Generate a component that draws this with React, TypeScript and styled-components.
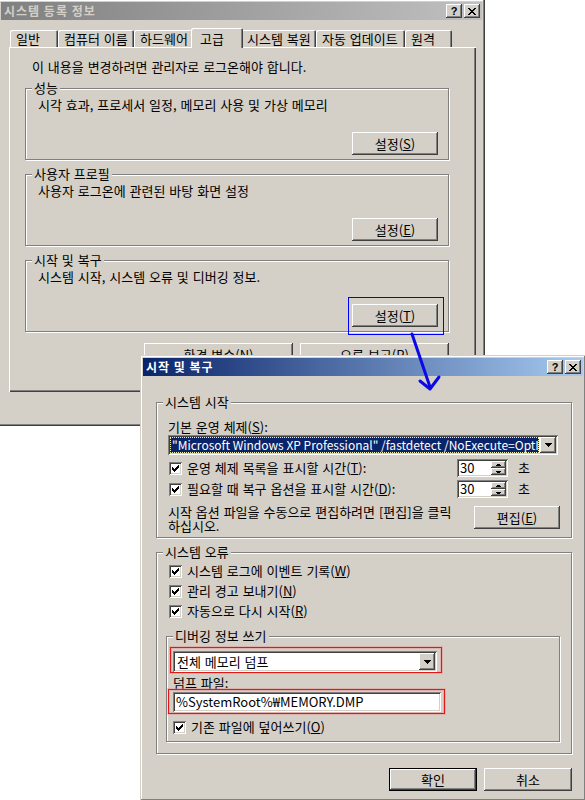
import React from "react";
import styled, { createGlobalStyle, css } from "styled-components";

const FACE = "#d4d0c8";

const GlobalStyle = createGlobalStyle`
  html, body { margin: 0; padding: 0; background: #ffffff; }
  body {
    font-family: "Noto Sans CJK KR", "Liberation Sans", sans-serif;
    font-size: 13px;
    word-spacing: 1px;
    color: #000;
  }
  * { box-sizing: border-box; }
`;

const raised = css`
  box-shadow: inset -1px -1px #404040, inset 1px 1px #ffffff,
    inset -2px -2px #808080, inset 2px 2px ${FACE};
`;

const frame = css`
  box-shadow: inset -1px -1px #404040, inset 1px 1px ${FACE},
    inset -2px -2px #808080, inset 2px 2px #ffffff;
`;

const sunken = css`
  box-shadow: inset 1px 1px #808080, inset -1px -1px #ffffff,
    inset 2px 2px #404040, inset -2px -2px ${FACE};
`;

const Desktop = styled.div`
  position: relative;
  width: 585px;
  height: 800px;
  overflow: hidden;
  background: #ffffff;
`;

const Window = styled.div<{ $x: number; $y: number; $w: number; $h: number }>`
  position: absolute;
  left: ${(p) => p.$x}px;
  top: ${(p) => p.$y}px;
  width: ${(p) => p.$w}px;
  height: ${(p) => p.$h}px;
  padding: 3px;
  background: ${FACE};
  ${frame}
  display: flex;
  flex-direction: column;
`;

const TitleBar = styled.div<{ $active?: boolean }>`
  flex: none;
  height: 18px;
  display: flex;
  align-items: center;
  padding: 0 2px 0 3px;
  background: ${(p) =>
    p.$active
      ? "linear-gradient(to right, #0a246a, #a6caf0)"
      : "linear-gradient(to right, #808080, #c0c0c0)"};
  color: ${(p) => (p.$active ? "#ffffff" : FACE)};
`;

const TitleText = styled.span`
  flex: 1;
  font-size: 12px;
  font-weight: bold;
  letter-spacing: 1px;
  word-spacing: 0;
  line-height: 18px;
  white-space: nowrap;
`;

const CaptionButtons = styled.div`
  display: flex;
  gap: 2px;
`;

const CaptionButton = styled.div`
  width: 16px;
  height: 14px;
  background: ${FACE};
  ${raised}
  display: flex;
  align-items: center;
  justify-content: center;
  color: #000;
  font-family: "Liberation Sans", sans-serif;
  font-weight: bold;
  font-size: 11px;
  line-height: 12px;
`;

/* property sheet (window 1) */

const SheetBody = styled.div`
  flex: 1;
  display: flex;
  flex-direction: column;
  padding: 8px 6px 0 8px;
`;

const TabStrip = styled.div`
  display: flex;
  align-items: flex-end;
  height: 19px;
  padding-left: 1px;
`;

const Tab = styled.div<{ $w: number; $active?: boolean }>`
  position: relative;
  z-index: ${(p) => (p.$active ? 2 : 1)};
  width: ${(p) => (p.$active ? p.$w + 4 : p.$w)}px;
  height: ${(p) => (p.$active ? 20 : 17)}px;
  margin: ${(p) => (p.$active ? "0 -2px -1px" : "0")};
  padding: ${(p) => (p.$active ? "4px 0 0 9px" : "2px 0 0 6px")};
  background: ${FACE};
  border-top-left-radius: 2px;
  border-top-right-radius: 2px;
  box-shadow: inset 1px 1px #ffffff, inset -1px 0 #404040, inset -2px 0 #808080;
  line-height: 14px;
  white-space: nowrap;
`;

const TabPanel = styled.div`
  height: 345px;
  background: ${FACE};
  box-shadow: inset 1px 1px #ffffff, inset -1px -1px #404040, inset -2px -2px #808080;
  padding: 13px 0 0 16px;
  display: flex;
  flex-direction: column;
`;

const Note = styled.div`
  line-height: 14px;
  padding-left: 7px;
  margin-bottom: 14px;
  white-space: nowrap;
`;

const Group = styled.div<{ $h: number; $w?: number }>`
  position: relative;
  flex: none;
  height: ${(p) => p.$h}px;
  width: ${(p) => (p.$w ? `${p.$w}px` : "auto")};
  border: 1px solid #808080;
  box-shadow: inset 1px 1px #ffffff, 1px 1px #ffffff;
  display: flex;
  flex-direction: column;
`;

const Legend = styled.span`
  position: absolute;
  top: -8px;
  left: 6px;
  padding: 0 2px;
  background: ${FACE};
  line-height: 14px;
  white-space: nowrap;
`;

const SectionBody = styled.div`
  flex: 1;
  display: flex;
  flex-direction: column;
  padding: 9px 10px 4px 12px;
`;

const Desc = styled.div`
  line-height: 14px;
  white-space: nowrap;
`;

const ButtonRow = styled.div<{ $gap?: number }>`
  display: flex;
  justify-content: flex-end;
  gap: ${(p) => p.$gap ?? 7}px;
  margin-top: auto;
`;

const Stack = styled.div<{ $gap: number }>`
  display: flex;
  flex-direction: column;
  gap: ${(p) => p.$gap}px;
  width: 424px;
`;

const Btn = styled.button<{ $w: number; $default?: boolean }>`
  width: ${(p) => p.$w}px;
  height: 23px;
  padding: 0;
  margin: 0;
  font: inherit;
  word-spacing: inherit;
  color: #000;
  background: ${FACE};
  border: ${(p) => (p.$default ? "1px solid #000000" : "none")};
  ${raised}
  display: flex;
  align-items: center;
  justify-content: center;
  line-height: 14px;
  white-space: nowrap;
  u { text-underline-offset: 1px; }
`;

const SheetButtons = styled.div`
  display: flex;
  justify-content: flex-end;
  gap: 6px;
  margin-top: 7px;
`;

/* dialog (window 2) */

const DialogBody = styled.div`
  flex: 1;
  display: flex;
  flex-direction: column;
  padding: 26px 11px 0 13px;
`;

const BootBody = styled.div`
  flex: 1;
  display: flex;
  flex-direction: column;
  padding: 17px 12px 0 11px;
`;

const FieldLabel = styled.div<{ $indent?: number; $lh?: number }>`
  line-height: ${(p) => p.$lh ?? 14}px;
  padding-left: ${(p) => p.$indent ?? 0}px;
  white-space: nowrap;
`;

const Combo = styled.div<{ $w?: number; $h: number }>`
  width: ${(p) => (p.$w ? `${p.$w}px` : "auto")};
  height: ${(p) => p.$h}px;
  background: #ffffff;
  ${sunken}
  padding: 2px;
  display: flex;
  align-items: stretch;
`;

const ComboValue = styled.div<{ $selected?: boolean }>`
  flex: 1;
  min-width: 0;
  overflow: hidden;
  white-space: nowrap;
  line-height: 14px;
  padding-left: 2px;
  font-size: ${(p) => (p.$selected ? "12px" : "inherit")};
  word-spacing: ${(p) => (p.$selected ? "0" : "inherit")};
  margin: ${(p) => (p.$selected ? "0 1px 0 0" : "0")};
  background: ${(p) => (p.$selected ? "#0a246a" : "transparent")};
  color: ${(p) => (p.$selected ? "#ffffff" : "#000")};
  outline: ${(p) => (p.$selected ? "1px dotted #f0f0b0" : "none")};
  outline-offset: -1px;
  display: flex;
  align-items: center;
`;

const DropButton = styled.div`
  width: 16px;
  flex: none;
  background: ${FACE};
  ${raised}
  display: flex;
  align-items: center;
  justify-content: center;
`;

const CheckRow = styled.div<{ $h: number; $indent?: number }>`
  display: flex;
  align-items: center;
  height: ${(p) => p.$h}px;
  padding-left: ${(p) => p.$indent ?? 1}px;
`;

const CheckBox = styled.span`
  flex: none;
  width: 13px;
  height: 13px;
  background: #ffffff;
  ${sunken}
  display: flex;
  align-items: center;
  justify-content: center;
`;

const CheckLabel = styled.span`
  flex: 1;
  margin-left: 5px;
  line-height: 14px;
  white-space: nowrap;
`;

const Spin = styled.div`
  width: 51px;
  height: 18px;
  background: #ffffff;
  ${sunken}
  padding: 2px;
  display: flex;
`;

const SpinValue = styled.span`
  flex: 1;
  line-height: 14px;
  padding-left: 1px;
`;

const SpinButtons = styled.div`
  width: 15px;
  display: flex;
  flex-direction: column;
`;

const SpinButton = styled.div`
  flex: 1;
  background: ${FACE};
  ${raised}
  display: flex;
  align-items: center;
  justify-content: center;
`;

const Unit = styled.span`
  width: 51px;
  padding-left: 10px;
  line-height: 14px;
`;

const EditRow = styled.div`
  display: flex;
  align-items: flex-start;
  margin-top: 7px;
  margin-right: -1px;
`;

const EditText = styled.div`
  flex: 1;
  line-height: 14px;
  white-space: nowrap;
`;

const ErrorBody = styled.div`
  flex: 1;
  display: flex;
  flex-direction: column;
  padding: 8px 11px 0 0;
`;

const DebugGroup = styled(Group)`
  margin: 15px 0 0 9px;
`;

const DebugBody = styled.div`
  display: flex;
  flex-direction: column;
  padding-top: 10px;
`;

const Highlight = styled.div<{ $w: number; $ml: number; $pad: string }>`
  width: ${(p) => p.$w}px;
  margin-left: ${(p) => p.$ml}px;
  padding: ${(p) => p.$pad};
  border: 1px solid #e01818;
  box-shadow: 0 0 0 1px rgba(240, 120, 120, 0.35), inset 0 0 0 1px rgba(240, 120, 120, 0.35);
`;

const TextInput = styled.div`
  height: 20px;
  background: #ffffff;
  ${sunken}
  padding: 2px 3px;
  line-height: 16px;
  white-space: nowrap;
  overflow: hidden;
`;

const Overlay = styled.svg`
  position: absolute;
  left: 0;
  top: 0;
  width: 585px;
  height: 800px;
  pointer-events: none;
  z-index: 10;
`;

function CloseGlyph() {
  return (
    <svg width="8" height="7" viewBox="0 0 8 7" shapeRendering="crispEdges">
      <path
        d="M0 0h2v1H0z M6 0h2v1H6z M1 1h2v1H1z M5 1h2v1H5z M2 2h4v1H2z M3 3h2v1H3z M2 4h4v1H2z M1 5h2v1H1z M5 5h2v1H5z M0 6h2v1H0z M6 6h2v1H6z"
        fill="#000"
      />
    </svg>
  );
}

function Caption() {
  return (
    <CaptionButtons>
      <CaptionButton>?</CaptionButton>
      <CaptionButton>
        <CloseGlyph />
      </CaptionButton>
    </CaptionButtons>
  );
}

function Check() {
  return (
    <CheckBox>
      <svg width="7" height="7" viewBox="0 0 7 7" shapeRendering="crispEdges">
        <path
          d="M0 2h1v3H0z M1 3h1v3H1z M2 4h1v3H2z M3 3h1v3H3z M4 2h1v3H4z M5 1h1v3H5z M6 0h1v3H6z"
          fill="#000"
        />
      </svg>
    </CheckBox>
  );
}

function DownArrow() {
  return (
    <svg width="7" height="4" viewBox="0 0 7 4" shapeRendering="crispEdges">
      <path d="M0 0h7v1H0z M1 1h5v1H1z M2 2h3v1H2z M3 3h1v1H3z" fill="#000" />
    </svg>
  );
}

function SpinBox({ value }: { value: string }) {
  return (
    <Spin>
      <SpinValue>{value}</SpinValue>
      <SpinButtons>
        <SpinButton>
          <svg width="5" height="2" viewBox="0 0 5 2" shapeRendering="crispEdges">
            <path d="M1 0h3v1H1z M0 1h5v1H0z" fill="#000" />
          </svg>
        </SpinButton>
        <SpinButton>
          <svg width="5" height="2" viewBox="0 0 5 2" shapeRendering="crispEdges">
            <path d="M0 0h5v1H0z M1 1h3v1H1z" fill="#000" />
          </svg>
        </SpinButton>
      </SpinButtons>
    </Spin>
  );
}

const tabs: { label: string; w: number; active?: boolean }[] = [
  { label: "일반", w: 48 },
  { label: "컴퓨터 이름", w: 76 },
  { label: "하드웨어", w: 59 },
  { label: "고급", w: 48, active: true },
  { label: "시스템 복원", w: 75 },
  { label: "자동 업데이트", w: 89 },
  { label: "원격", w: 47 },
];

const sections = [
  { title: "성능", desc: "시각 효과, 프로세서 일정, 메모리 사용 및 가상 메모리", key: "S" },
  { title: "사용자 프로필", desc: "사용자 로그온에 관련된 바탕 화면 설정", key: "E" },
  { title: "시작 및 복구", desc: "시스템 시작, 시스템 오류 및 디버깅 정보.", key: "T" },
];

export default function App() {
  return (
    <Desktop>
      <GlobalStyle />

      <Window $x={-2} $y={-1} $w={487} $h={427}>
        <TitleBar>
          <TitleText>시스템 등록 정보</TitleText>
          <Caption />
        </TitleBar>
        <SheetBody>
          <TabStrip>
            {tabs.map((t) => (
              <Tab key={t.label} $w={t.w} $active={t.active}>
                {t.label}
              </Tab>
            ))}
          </TabStrip>
          <TabPanel>
            <Note>이 내용을 변경하려면 관리자로 로그온해야 합니다.</Note>
            <Stack $gap={14}>
              {sections.map((s) => (
                <Group key={s.title} $h={72}>
                  <Legend>{s.title}</Legend>
                  <SectionBody>
                    <Desc>{s.desc}</Desc>
                    <ButtonRow>
                      <Btn $w={86}>
                        설정(<u>{s.key}</u>)
                      </Btn>
                    </ButtonRow>
                  </SectionBody>
                </Group>
              ))}
              <ButtonRow $gap={7} style={{ marginTop: -3 }}>
                <Btn $w={149}>
                  환경 변수(<u>N</u>)
                </Btn>
                <Btn $w={149}>
                  오류 보고(<u>R</u>)
                </Btn>
              </ButtonRow>
            </Stack>
          </TabPanel>
          <SheetButtons>
            <Btn $w={75} $default>
              확인
            </Btn>
            <Btn $w={75}>취소</Btn>
            <Btn $w={75}>
              적용(<u>A</u>)
            </Btn>
          </SheetButtons>
        </SheetBody>
      </Window>

      <Window $x={140} $y={355} $w={446} $h={446}>
        <TitleBar $active>
          <TitleText>시작 및 복구</TitleText>
          <Caption />
        </TitleBar>
        <DialogBody>
          <Group $h={136}>
            <Legend>시스템 시작</Legend>
            <BootBody>
              <FieldLabel>
                기본 운영 체제(<u>S</u>):
              </FieldLabel>
              <Combo $h={20} style={{ marginTop: 1, marginRight: 1 }}>
                <ComboValue $selected>
                  "Microsoft Windows XP Professional" /fastdetect /NoExecute=OptIn
                </ComboValue>
                <DropButton>
                  <DownArrow />
                </DropButton>
              </Combo>
              <CheckRow $h={18} style={{ marginTop: 4 }}>
                <Check />
                <CheckLabel>
                  운영 체제 목록을 표시할 시간(<u>T</u>):
                </CheckLabel>
                <SpinBox value="30" />
                <Unit>초</Unit>
              </CheckRow>
              <CheckRow $h={18} style={{ marginTop: 3 }}>
                <Check />
                <CheckLabel>
                  필요할 때 복구 옵션을 표시할 시간(<u>D</u>):
                </CheckLabel>
                <SpinBox value="30" />
                <Unit>초</Unit>
              </CheckRow>
              <EditRow>
                <EditText>
                  시작 옵션 파일을 수동으로 편집하려면 [편집]을 클릭
                  <br />
                  하십시오.
                </EditText>
                <Btn $w={86} style={{ marginTop: 1 }}>
                  편집(<u>E</u>)
                </Btn>
              </EditRow>
            </BootBody>
          </Group>

          <Group $h={202} style={{ marginTop: 14 }}>
            <Legend>시스템 오류</Legend>
            <ErrorBody>
              <CheckRow $h={20} $indent={12}>
                <Check />
                <CheckLabel>
                  시스템 로그에 이벤트 기록(<u>W</u>)
                </CheckLabel>
              </CheckRow>
              <CheckRow $h={20} $indent={12}>
                <Check />
                <CheckLabel>
                  관리 경고 보내기(<u>N</u>)
                </CheckLabel>
              </CheckRow>
              <CheckRow $h={20} $indent={12}>
                <Check />
                <CheckLabel>
                  자동으로 다시 시작(<u>R</u>)
                </CheckLabel>
              </CheckRow>
              <DebugGroup $h={106}>
                <Legend>디버깅 정보 쓰기</Legend>
                <DebugBody>
                  <Highlight $w={272} $ml={3} $pad="3px 4px 0 2px">
                    <Combo $h={21}>
                      <ComboValue>전체 메모리 덤프</ComboValue>
                      <DropButton>
                        <DownArrow />
                      </DropButton>
                    </Combo>
                  </Highlight>
                  <FieldLabel $indent={6} $lh={13} style={{ marginTop: 3 }}>
                    덤프 파일:
                  </FieldLabel>
                  <Highlight $w={277} $ml={1} $pad="2px 3px 1px 4px">
                    <TextInput>%SystemRoot%₩MEMORY.DMP</TextInput>
                  </Highlight>
                  <CheckRow $h={18} $indent={6} style={{ marginTop: 4 }}>
                    <Check />
                    <CheckLabel>
                      기존 파일에 덮어쓰기(<u>O</u>)
                    </CheckLabel>
                  </CheckRow>
                </DebugBody>
              </DebugGroup>
            </ErrorBody>
          </Group>

          <ButtonRow $gap={7} style={{ marginTop: 14 }}>
            <Btn $w={88} $default>
              확인
            </Btn>
            <Btn $w={88}>취소</Btn>
          </ButtonRow>
        </DialogBody>
      </Window>

      <Overlay viewBox="0 0 585 800">
        <rect x="348.5" y="297.5" width="95" height="37" fill="none" stroke="#0000ff" strokeWidth="1" />
        <path d="M412 334 L430 387" stroke="#0a0ae6" strokeWidth="3" strokeLinecap="round" fill="none" />
        <path
          d="M420 381 L430 389 L439 377"
          stroke="#0a0ae6"
          strokeWidth="3"
          fill="none"
          strokeLinejoin="round"
          strokeLinecap="round"
        />
      </Overlay>
    </Desktop>
  );
}
